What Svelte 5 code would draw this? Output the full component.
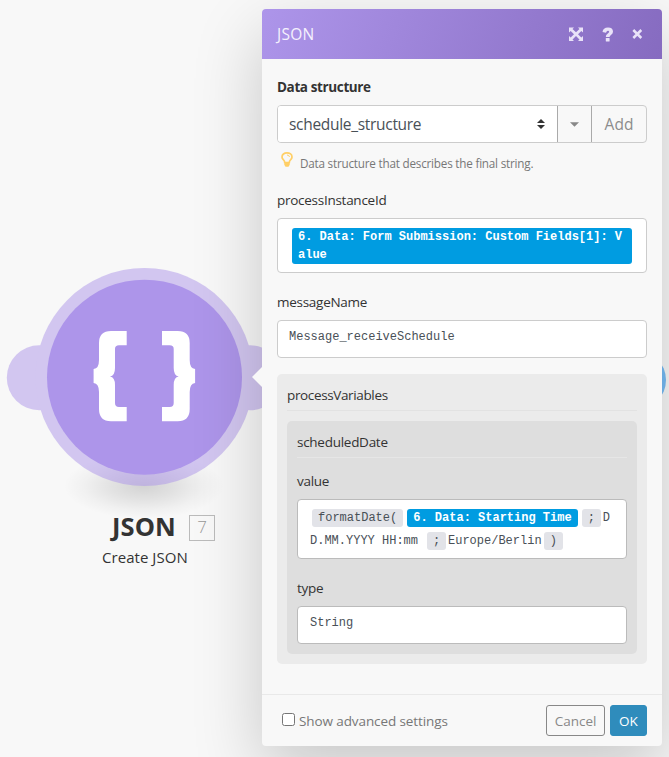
<script>
  const brace =
    'M126.7 331H111Q99 331 99 343V360Q99 368.6 93.6 369V383Q99 383.6 99 392V409Q99 421.3 111 421.3H126.7V407H119Q115 407 115 403V385Q115 377 110 376.4Q115 375.8 115 368V349Q115 345.3 119 345.3H126.7Z';
</script>

<div class="workspace">
  <svg class="nodes" width="669" height="757" viewBox="0 0 669 757">
    <defs>
      <radialGradient id="ground">
        <stop offset="0" stop-color="#000" stop-opacity=".15" />
        <stop offset=".4" stop-color="#000" stop-opacity=".09" />
        <stop offset=".75" stop-color="#000" stop-opacity=".03" />
        <stop offset="1" stop-color="#000" stop-opacity="0" />
      </radialGradient>
    </defs>
    <ellipse cx="144" cy="486" rx="80" ry="33" fill="url(#ground)" />
    <g fill="#ad95ea" opacity=".5">
      <circle cx="39.3" cy="377.7" r="32.5" />
      <circle cx="250" cy="377.7" r="32.5" />
      <circle cx="144.5" cy="377" r="109" />
    </g>
    <circle cx="144.5" cy="377.2" r="97.5" fill="#ad95ea" />
    <g fill="#fff">
      <path d={brace} />
      <path d={brace} transform="translate(288.7 0) scale(-1 1)" />
    </g>
    <circle cx="636" cy="380" r="30" fill="#76bcf5" />
  </svg>

  <div class="caption">
    <div class="name"><b>JSON</b><span class="num">7</span></div>
    <div class="sub">Create JSON</div>
  </div>

  <section class="panel">
    <i class="pointer"></i>
    <header>
      <span class="title">JSON</span>
      <svg width="80" height="20" viewBox="0 0 80 20">
        <g fill="#e9e2f8">
          <path d="M3 3.5h5L6.5 5 10 8.3 13.5 5 12 3.5h5v5L15.3 7 12 10.2l3.3 3.2L17 12v5h-5l1.5-1.6L10 12l-3.5 3.4L8 17H3v-5l1.7 1.4L8 10.2 4.7 7 3 8.500Z" />
          <path d="M36.500 8Q37 3.500 42 3.500Q47 3.600 47 7.700Q47 9.700 45 11Q43.600 11.900 43.600 13H39.800Q39.700 10.600 41.800 9.400Q43.200 8.600 43.200 7.700Q43.100 6.700 42 6.700Q40.600 6.700 40 8.700Z" />
          <rect x="39.800" y="14" width="3.800" height="3.500" rx=".6" />
        </g>
        <path d="M67.300 6l8 8m0-8l-8 8" stroke="#e9e2f8" stroke-width="2.500" />
      </svg>
    </header>

    <div class="body">
      <div class="label strong">Data structure</div>
      <div class="group">
        <div class="select">
          <span>schedule_structure</span>
          <svg width="8" height="10" viewBox="0 0 8 10"><path d="M0 4 4 0l4 4zM0 6l4 4 4-4z" fill="#333" /></svg>
        </div>
        <div class="drop"><svg width="9" height="5" viewBox="0 0 9 5"><path d="M0 .3h9L4.500 4.700z" fill="#888" /></svg></div>
        <div class="add">Add</div>
      </div>
      <div class="hint">
        <svg width="12" height="16" viewBox="0 0 12 16">
          <path d="M3.700 10.500Q3.700 9 2.300 7.700Q1 6.300 1 4.900C1 2.500 3.200.9 6 .9s5 1.600 5 4Q11 6.300 9.700 7.700Q8.300 9 8.300 10.500Z" fill="none" stroke="#ffcf66" stroke-width="1.700" />
          <path d="M6 3Q8.200 3 8.500 5" fill="none" stroke="#ffcf66" />
          <path d="M3.300 10.500h5.400v2.300L7.500 14.800h-3L3.300 12.800z" fill="#ffcf66" />
        </svg>
        <span>Data structure that describes the final string.</span>
      </div>

      <div class="label id">processInstanceId</div>
      <div class="input two"><span class="chip wide">6. Data: Form Submission: Custom Fields[1]: V<br />alue</span></div>

      <div class="label msg">messageName</div>
      <div class="input">Message_receiveSchedule</div>

      <div class="box">
        <div class="head vars">processVariables</div>
        <div class="box inner">
          <div class="head date">scheduledDate</div>
          <div class="label value">value</div>
          <div class="input formula">
            <div class="row first"><span class="fn">formatDate(</span><span class="chip">6. Data: Starting Time</span><span class="fn semi">;</span><span class="d">D</span></div>
            <div class="row"><span class="fmt">D.MM.YYYY HH:mm</span><span class="fn semi">;</span><span class="tz">Europe/Berlin</span><span class="fn semi">)</span></div>
          </div>
          <div class="label type">type</div>
          <div class="input plain">String</div>
        </div>
      </div>
    </div>

    <footer>
      <i class="check"></i>
      <span class="adv">Show advanced settings</span>
      <span class="btn cancel"><span>Cancel</span></span>
      <span class="btn ok"><span>OK</span></span>
    </footer>
  </section>
</div>

<style>
  .workspace {
    position: relative;
    width: 669px;
    height: 757px;
    overflow: hidden;
    background: #f8f8f8;
    font-family: 'Open Sans', 'Noto Sans', sans-serif;
    font-size: 13.5px;
    color: #333;
  }
  .workspace :global(*) { box-sizing: border-box; }
  svg { display: block; flex: none; }
  .nodes { position: absolute; inset: 0; }
  .caption { position: absolute; left: 60px; top: 510px; width: 190px; }
  .name { display: flex; padding-left: 52px; height: 34px; line-height: 32px; }
  .name b { width: 77px; font-size: 25.500px; letter-spacing: .1px; }
  .num {
    width: 26px; height: 26px; margin-top: 5px;
    border: 1px solid #bbb; color: #999;
    font-size: 17px; line-height: 22px; text-align: center; font-weight: 300;
  }
  .sub { padding-left: 42px; font-size: 15px; line-height: 26px; letter-spacing: .05px; white-space: nowrap; }

  .panel {
    position: absolute; left: 262px; top: 9px;
    width: 400px; height: 737px;
    display: flex; flex-direction: column;
    border-radius: 4px;
    background: #f8f8f8;
    box-shadow: 0 25px 70px rgba(0, 0, 0, .2);
    white-space: nowrap;
  }
  .pointer {
    position: absolute; left: -10px; top: 358px;
    border: 10px solid transparent; border-left: 0; border-right-color: #f8f8f8;
  }
  header {
    display: flex; justify-content: space-between; align-items: center;
    height: 50px; padding: 0 18px 0 15px;
    border-radius: 4px 4px 0 0;
    background: linear-gradient(110deg, #ad95ea, #866bc0);
    color: #f5f1fd;
  }
  header svg { margin: 0 -2px 1px 0; }
  .title { font-size: 15.500px; letter-spacing: .25px; }
  .body { flex: 1; padding: 18px 15px 0; }
  .label { height: 28px; line-height: 20px; letter-spacing: -.27px; }
  .label.strong { font-weight: 700; letter-spacing: -.38px; }
  .group { display: flex; height: 38px; border: 1px solid #ccc; border-radius: 4px; font-size: 15.500px; }
  .select {
    width: 280px; padding: 0 12px 0 11px;
    display: flex; justify-content: space-between; align-items: center;
    background: #fff; color: #495057; border-right: 1px solid #aaa; border-radius: 3px 0 0 3px;
    letter-spacing: -.3px;
  }
  .drop { width: 34px; display: flex; align-items: center; justify-content: center; border-right: 1px solid #aaa; }
  .add { flex: 1; text-align: center; line-height: 36px; color: #8c8c8c; }
  .hint { display: flex; height: 47px; padding: 9px 0 0 4px; color: #777; font-size: 11.700px; line-height: 22px; }
  .hint span { margin-left: 7px; letter-spacing: -.21px; }
  .input {
    height: 38px; padding: 7px 11px;
    border: 1px solid #ccc; border-radius: 4px;
    background: #fff; color: #495057;
    font: 12px/18px 'Liberation Mono', monospace;
    letter-spacing: 0;
  }
  .two { height: 55px; padding: 9px 14px; margin-bottom: 19px; }
  .chip {
    display: inline-block; height: 18px; padding: 0 6px;
    border-radius: 3px; background: #009ce1; color: #fff; font-weight: 700; line-height: 18px;
  }
  .wide { display: block; height: 36px; width: 340px; }
  .box { margin-top: 16px; height: 290px; padding: 11px 10px 10px; border-radius: 5px; background: #ebebeb; }
  .head { height: 26px; line-height: 20px; border-bottom: 1px solid #e2e2e2; letter-spacing: -.27px; }
  .head.vars { letter-spacing: -.36px; }
  .inner { margin-top: 10px; height: 233px; background: #dedede; }
  .inner .head { border-color: #e6e6e6; margin-bottom: 13px; }
  .inner .input { border-color: #bbb; }
  .inner .formula { height: 60px; padding: 9px 14px; margin-bottom: 19px; }
  .inner .label { height: 28px; }
  .inner .plain { padding-left: 12px; }
  .row { display: flex; height: 23px; }
  .fn { height: 18px; padding: 0 6px; border-radius: 3px; background: #e2e3e8; line-height: 18px; }
  .first .chip { margin: 0 4px; }
  .semi { width: 19px; }
  .d { margin-left: 2px; line-height: 18px; }
  .row:last-child { margin-left: -2px; }
  .fmt { width: 117px; line-height: 18px; }
  .tz { margin: 0 2px; line-height: 18px; }
  footer {
    display: flex; align-items: center;
    height: 52px; padding: 0 15px 0 20px; border-top: 1px solid #e9e9e9; color: #777;
  }
  .check { width: 13px; height: 13px; margin: -3px 4px 0 0; border: 1px solid #767676; border-radius: 2.500px; background: #fff; }
  .adv { flex: 1; letter-spacing: -.1px; }
  .btn { height: 31px; border: 1px solid #888; border-radius: 3px; text-align: center; line-height: 30px; }
  .cancel { width: 59px; margin-right: 5px; color: #888; }
  .ok { width: 37px; background: #2f8cbc; border-color: #2f8cbc; color: #fff; }
</style>
